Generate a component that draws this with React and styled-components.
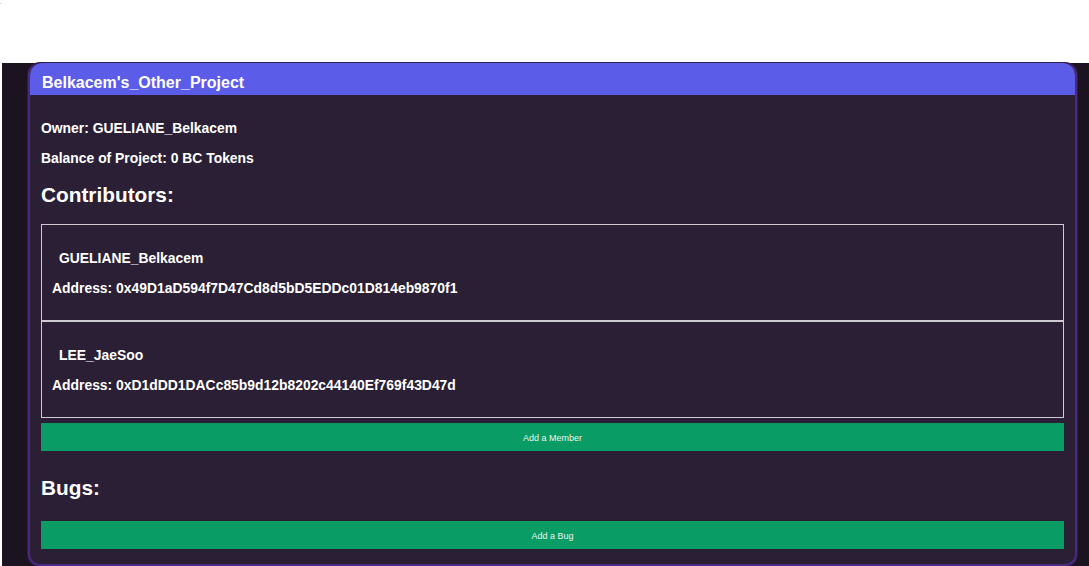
import React from "react";
import styled, { createGlobalStyle } from "styled-components";

const Global = createGlobalStyle`
  html, body { margin: 0; padding: 0; background: #ffffff; }
  body { font-family: "Liberation Sans", Arial, sans-serif; overflow: hidden; }
`;

const TopBar = styled.div`
  height: 63px;
  position: relative;
`;

const Dot = styled.span`
  position: absolute;
  left: 0;
  top: 0;
  font-size: 5px;
  color: #d01010;
  line-height: 5px;
`;

const Main = styled.div`
  margin-left: 2px;
  background: #1b1420;
  display: flex;
  padding: 0 12px 0 26px;
  height: 503px;
  box-sizing: border-box;
`;

const Card = styled.section`
  flex: 1;
  background: #2b1f35;
  border: 2px solid #4a2a80;
  border-top: none;
  border-radius: 12px;
  box-shadow: 0 0 0 1px #2e1d45;
  display: flex;
  flex-direction: column;
  color: #ffffff;
  overflow: hidden;
`;

const Header = styled.h2`
  margin: 0;
  height: 32px;
  background: #5b5ce8;
  border-radius: 12px 12px 0 0;
  font-size: 16px;
  font-weight: bold;
  line-height: 18px;
  padding: 11px 12px 0;
  box-sizing: border-box;
`;

const Body = styled.div`
  padding: 0 11px 0 11px;
  display: flex;
  flex-direction: column;
`;

const Info = styled.p`
  margin: ${(p) => p.$mt}px 0 0;
  font-size: 13.9px;
  font-weight: bold;
  line-height: 15px;
`;

const SectionTitle = styled.h3`
  margin: ${(p) => p.$mt}px 0 0;
  font-size: 20.8px;
  font-weight: bold;
  line-height: 23px;
`;

const List = styled.div`
  margin-top: 18px;
  display: flex;
  flex-direction: column;
`;

const Member = styled.div`
  border: 1px solid #cfc9d2;
  height: 97px;
  box-sizing: border-box;
  padding: 0 10px;
  display: flex;
  flex-direction: column;
`;

const MemberName = styled.div`
  margin: 26px 0 0 7px;
  font-size: 13.9px;
  font-weight: bold;
  line-height: 15px;
`;

const MemberAddress = styled.div`
  margin-top: 15px;
  font-size: 13.9px;
  font-weight: bold;
  line-height: 15px;
`;

const ActionButton = styled.button`
  margin-top: ${(p) => p.$mt}px;
  height: 28px;
  width: 100%;
  border: none;
  background: #099c64;
  color: #e8f5ee;
  font-family: "Liberation Sans", Arial, sans-serif;
  font-size: 9px;
  padding: 2px 0 0;
  cursor: pointer;
`;

const members = [
  { name: "GUELIANE_Belkacem", address: "0x49D1aD594f7D47Cd8d5bD5EDDc01D814eb9870f1" },
  { name: "LEE_JaeSoo", address: "0xD1dDD1DACc85b9d12b8202c44140Ef769f43D47d" },
];

export default function App() {
  return (
    <>
      <Global />
      <TopBar>
        <Dot>.</Dot>
      </TopBar>
      <Main>
        <Card>
          <Header>Belkacem's_Other_Project</Header>
          <Body>
            <Info $mt={26}>Owner: GUELIANE_Belkacem</Info>
            <Info $mt={15}>Balance of Project: 0 BC Tokens</Info>
            <SectionTitle $mt={17}>Contributors:</SectionTitle>
            <List>
              {members.map((m) => (
                <Member key={m.address}>
                  <MemberName>{m.name}</MemberName>
                  <MemberAddress>Address: {m.address}</MemberAddress>
                </Member>
              ))}
            </List>
            <ActionButton $mt={5}>Add a Member</ActionButton>
            <SectionTitle $mt={25}>Bugs:</SectionTitle>
            <ActionButton $mt={22}>Add a Bug</ActionButton>
          </Body>
        </Card>
      </Main>
    </>
  );
}
